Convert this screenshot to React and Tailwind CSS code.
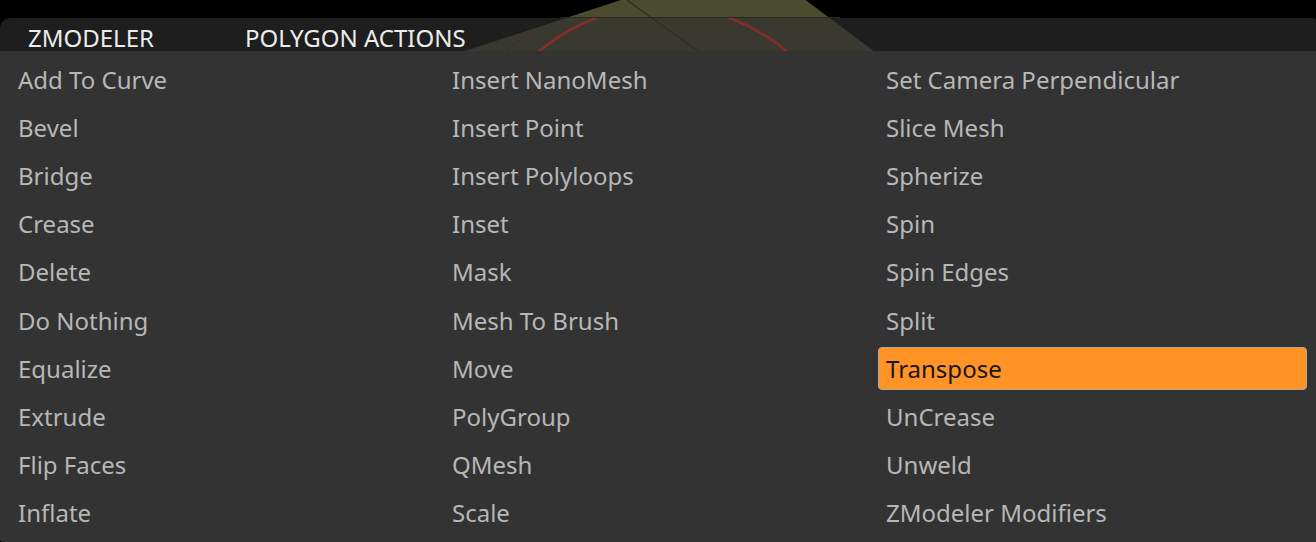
import React from "react";

const cols = [
  ["Add To Curve", "Bevel", "Bridge", "Crease", "Delete", "Do Nothing", "Equalize", "Extrude", "Flip Faces", "Inflate"],
  ["Insert NanoMesh", "Insert Point", "Insert Polyloops", "Inset", "Mask", "Mesh To Brush", "Move", "PolyGroup", "QMesh", "Scale"],
  ["Set Camera Perpendicular", "Slice Mesh", "Spherize", "Spin", "Spin Edges", "Split", "Transpose", "UnCrease", "Unweld", "ZModeler Modifiers"],
];

export default function App() {
  const font = { fontFamily: '"Noto Sans", "Open Sans", sans-serif' };
  return (
    <div className="relative w-[1316px] h-[542px] bg-black overflow-hidden" style={font}>
      <svg className="absolute left-0 top-0" width="1316" height="52" viewBox="0 0 1316 52">
        <polygon points="462,52 627,-2 803,-2 875,52" fill="#4b4b2f" />
        <line x1="627" y1="0" x2="699" y2="52" stroke="#2c2c20" strokeWidth="1.2" />
        <line x1="505" y1="52" x2="520" y2="40" stroke="#34342a" strokeWidth="1" />
        <line x1="560" y1="17.5" x2="840" y2="17.5" stroke="#2a2a1e" strokeWidth="1" />
      </svg>
      <div className="relative pt-[18px]">
        <div className="h-[33px] pt-[7px] rounded-tl-[10px] rounded-tr-[3px] bg-[rgba(47,47,47,0.64)] flex items-center text-[24px] leading-none text-[#ececec]">
          <span className="ml-[28px] w-[217px]">ZMODELER</span>
          <span>POLYGON ACTIONS</span>
        </div>
        <div className="h-[491px] bg-[#333333] rounded-bl-[3px] px-[10px] pt-[5px] grid grid-cols-[429px_429px_429px] gap-x-[5px]">
          {cols.map((col, ci) => (
            <div key={ci} className="flex flex-col">
              {col.map((item) => {
                const active = item === "Transpose";
                return (
                  <div key={item} className="h-[48.1px] flex items-center">
                    <div
                      className={
                        active
                          ? "w-full h-[43px] flex items-center pl-[7px] rounded-[4px] border border-[#b3a89a] bg-[#ff9326] text-[#161616] text-[24px] leading-none"
                          : "w-full h-[43px] flex items-center pl-[8px] text-[#b7b7b7] text-[24px] leading-none"
                      }
                    >
                      {item}
                    </div>
                  </div>
                );
              })}
            </div>
          ))}
        </div>
      </div>
      <svg className="absolute left-0 top-0 pointer-events-none" width="1316" height="52" viewBox="0 0 1316 52">
        <clipPath id="hdr">
          <rect x="0" y="18" width="1316" height="33" />
        </clipPath>
        <circle cx="663" cy="198" r="192" fill="none" stroke="#8a2c2c" strokeWidth="2.6" clipPath="url(#hdr)" />
      </svg>
    </div>
  );
}
